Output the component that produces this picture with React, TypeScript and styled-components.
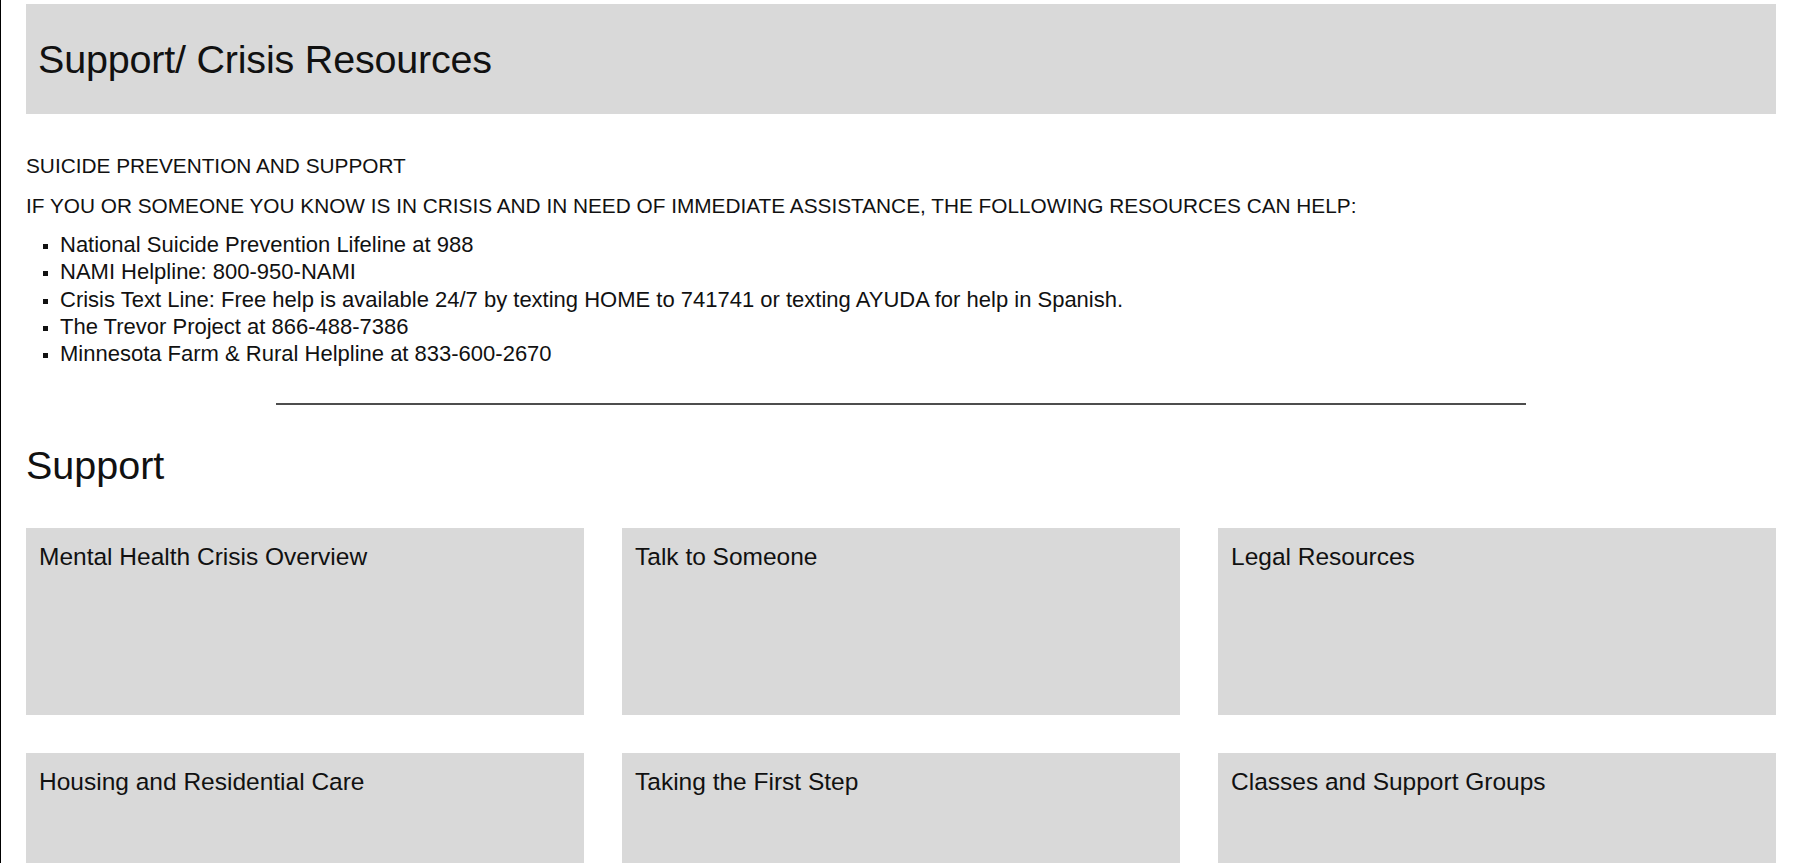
import styled, { createGlobalStyle } from 'styled-components';

const GlobalStyle = createGlobalStyle`
  html, body {
    margin: 0;
    padding: 0;
    background: #ffffff;
  }

  body {
    font-family: 'Liberation Sans', Arial, sans-serif;
    color: #111111;
  }
`;

const SUPPORT_CARDS = [
  'Mental Health Crisis Overview',
  'Talk to Someone',
  'Legal Resources',
  'Housing and Residential Care',
  'Taking the First Step',
  'Classes and Support Groups',
];

const HOTLINES = [
  'National Suicide Prevention Lifeline at 988',
  'NAMI Helpline: 800-950-NAMI',
  'Crisis Text Line: Free help is available 24/7 by texting HOME to 741741 or texting AYUDA for help in Spanish.',
  'The Trevor Project at 866-488-7386',
  'Minnesota Farm & Rural Helpline at 833-600-2670',
];

const App = () => (
  <>
    <GlobalStyle />
    <Page>
      <Banner>
        <BannerTitle>Support/ Crisis Resources</BannerTitle>
      </Banner>

      <Intro>
        <Eyebrow>SUICIDE PREVENTION AND SUPPORT</Eyebrow>
        <Lead>
          IF YOU OR SOMEONE YOU KNOW IS IN CRISIS AND IN NEED OF IMMEDIATE ASSISTANCE, THE FOLLOWING
          RESOURCES CAN HELP:
        </Lead>
        <HotlineList>
          {HOTLINES.map((line) => (
            <li key={line}>{line}</li>
          ))}
        </HotlineList>
      </Intro>

      <Divider />

      <SectionTitle>Support</SectionTitle>

      <CardGrid>
        {SUPPORT_CARDS.map((title) => (
          <Card key={title}>
            <CardTitle>{title}</CardTitle>
          </Card>
        ))}
      </CardGrid>
    </Page>
  </>
);

export default App;

const Page = styled.div`
  min-height: 100vh;
  box-sizing: border-box;
  border-left: 1px solid #000000;
  padding: 4px 25px 40px 25px;
`;

const Banner = styled.header`
  display: flex;
  align-items: center;
  height: 110px;
  padding: 0 12px;
  background: #d9d9d9;
`;

const BannerTitle = styled.h1`
  margin: 0;
  font-size: 39.5px;
  font-weight: 400;
  line-height: 46px;
  letter-spacing: -0.2px;
`;

const Intro = styled.section`
  display: flex;
  flex-direction: column;
  padding-top: 38px;
`;

const Eyebrow = styled.p`
  margin: 0;
  font-size: 20.8px;
  line-height: 27px;
`;

const Lead = styled.p`
  margin: 13px 0 0;
  font-size: 20.8px;
  line-height: 27px;
`;

const HotlineList = styled.ul`
  margin: 12px 0 0;
  padding-left: 34px;
  list-style: square;
  font-size: 22px;
  line-height: 27.3px;

  li::marker {
    font-size: 17px;
  }
`;

const Divider = styled.hr`
  width: 1250px;
  margin: 36px auto 0;
  border: 0;
  border-top: 2px solid #4d4d4d;
`;

const SectionTitle = styled.h2`
  margin: 37px 0 0;
  font-size: 39.5px;
  font-weight: 400;
  line-height: 46px;
`;

const CardGrid = styled.div`
  display: grid;
  grid-template-columns: repeat(3, 1fr);
  gap: 38px;
  margin-top: 40px;
`;

const Card = styled.article`
  height: 187px;
  box-sizing: border-box;
  padding: 14px 13px;
  background: #d9d9d9;
`;

const CardTitle = styled.h3`
  margin: 0;
  font-size: 24.5px;
  font-weight: 400;
  line-height: 29px;
`;
